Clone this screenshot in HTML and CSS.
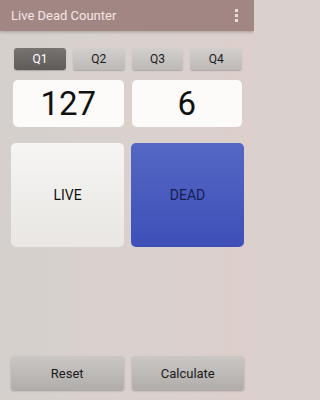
FILE: index.html
```html
<!DOCTYPE html>
<html>
<head>
<meta charset="utf-8">
<link rel="stylesheet" href="styles.css">
</head>
<body>
<div class="app">
  <header class="bar">
    <span class="title">Live Dead Counter</span>
    <span class="menu"><i></i><i></i><i></i></span>
  </header>
  <main class="content">
    <div class="quarters">
      <div class="q active">Q1</div>
      <div class="q">Q2</div>
      <div class="q">Q3</div>
      <div class="q">Q4</div>
    </div>
    <div class="counts">
      <div class="count">127</div>
      <div class="count">6</div>
    </div>
    <div class="pads">
      <div class="pad live">LIVE</div>
      <div class="pad dead">DEAD</div>
    </div>
    <div class="spacer"></div>
    <div class="actions">
      <div class="act">Reset</div>
      <div class="act">Calculate</div>
    </div>
  </main>
</div>
</body>
</html>
```
FILE: styles.css
```css
* { box-sizing: border-box; }
html { background: #d9d1ce; }
html, body { margin: 0; padding: 0; }
body { font-family: Roboto, "Liberation Sans", sans-serif; width: 254px; height: 400px; overflow: hidden; }
.app {
  width: 254px; height: 400px; display: flex; flex-direction: column;
  background: linear-gradient(90deg, #d5d0cc 0%, #d9d1ce 50%, #dccfcc 100%);
}
.bar {
  height: 31px; background: #a18684; display: flex; align-items: center;
  justify-content: space-between; padding: 0 16px 0 11px;
  box-shadow: 0 1px 3px rgba(0,0,0,0.25); position: relative; z-index: 1;
}
.title { color: #f6e6e6; font-size: 13px; }
.menu { display: flex; flex-direction: column; gap: 2px; }
.menu i { display: block; width: 3px; height: 3px; background: #eddcdc; }
.content { flex: 1; display: flex; flex-direction: column; padding: 17px 10px 10px 11px; }
.quarters { display: flex; gap: 7px; padding: 0 2px 0 3px; }
.q {
  flex: 1; height: 22px; border-radius: 3px; display: flex; align-items: center; justify-content: center;
  font-size: 12px; color: #1a1a1a;
  background: linear-gradient(180deg, #d2cfcd 0%, #bdb9b7 100%);
  box-shadow: 0 1px 1px rgba(0,0,0,0.2);
}
.q.active { background: linear-gradient(180deg, #77736f 0%, #5e5b59 100%); color: #fff; }
.counts { display: flex; gap: 8px; margin-top: 10px; padding: 0 2px; }
.count {
  flex: 1; height: 47px; background: #fcfbfa; border-radius: 5px;
  display: flex; align-items: center; justify-content: center;
  font-size: 33px; color: #111;
}
.pads { display: flex; gap: 7px; margin-top: 16px; }
.pad {
  flex: 1; height: 104px; border-radius: 5px; display: flex; align-items: center; justify-content: center;
  font-size: 14px;
}
.pad.live { background: linear-gradient(180deg, #f6f5f3 0%, #e9e6e3 100%); color: #111; }
.pad.dead { background: linear-gradient(180deg, #5567c4 0%, #3e4fb8 100%); color: #161d55; }
.spacer { flex: 1; }
.actions { display: flex; gap: 8px; }
.act {
  flex: 1; height: 34px; border-radius: 3px; display: flex; align-items: center; justify-content: center;
  font-size: 13px; color: #1a1a1a;
  background: linear-gradient(180deg, #cbc7c5 0%, #b1adab 100%);
  box-shadow: 0 1px 2px rgba(0,0,0,0.25);
}
```
